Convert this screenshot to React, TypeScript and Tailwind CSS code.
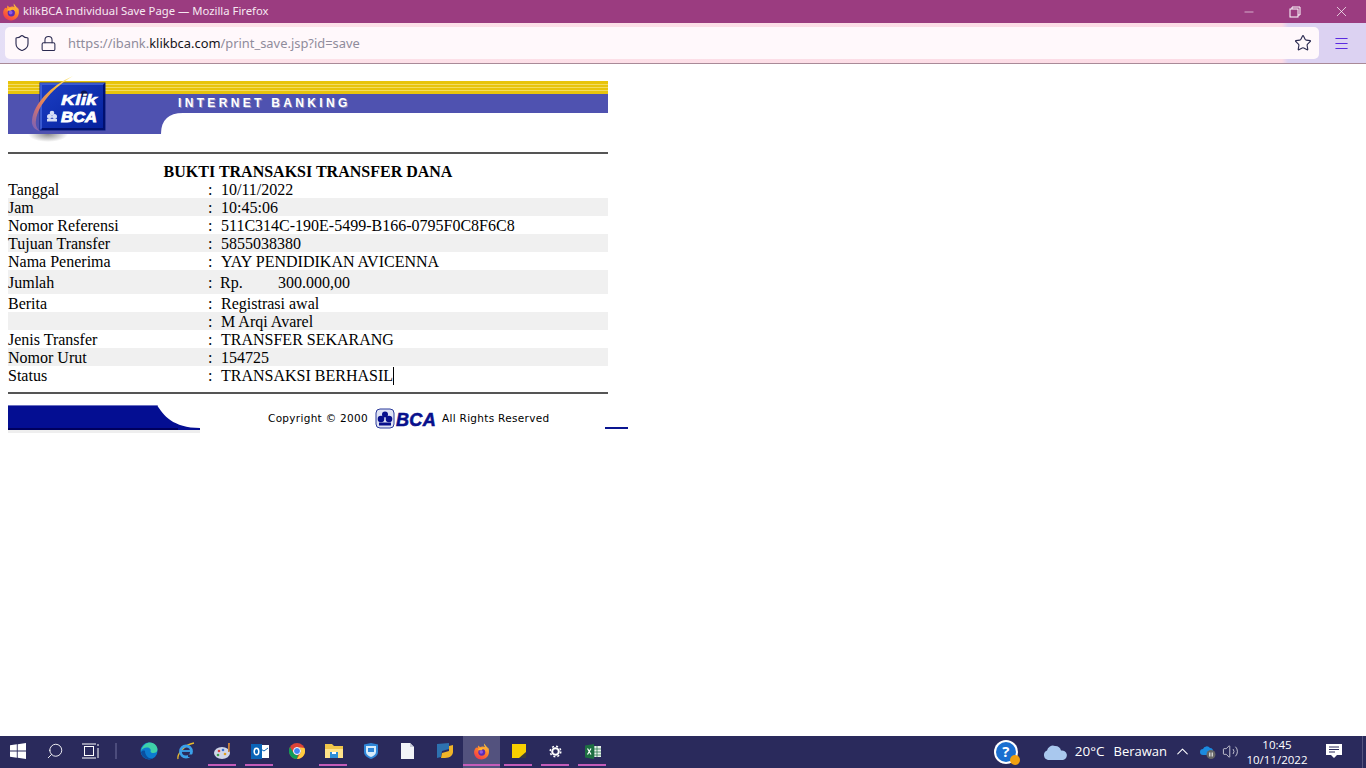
import React from "react";
import { Shield, Lock, Star, Menu, X, Minus, ChevronUp, Volume2, Search } from "lucide-react";

const serif = { fontFamily: '"Liberation Serif", serif' };

type Row = { label: string; value: React.ReactNode; shade?: boolean; tall?: boolean };
const rows: Row[] = [
  { label: "Tanggal", value: "10/11/2022" },
  { label: "Jam", value: "10:45:06", shade: true },
  { label: "Nomor Referensi", value: "511C314C-190E-5499-B166-0795F0C8F6C8" },
  { label: "Tujuan Transfer", value: "5855038380", shade: true },
  { label: "Nama Penerima", value: "YAY PENDIDIKAN AVICENNA" },
  {
    label: "Jumlah",
    shade: true,
    tall: true,
    value: (
      <span className="flex -ml-[1px]">
        <span className="w-[58px]">Rp.</span>
        <span>300.000,00</span>
      </span>
    ),
  },
  { label: "Berita", value: "Registrasi awal" },
  { label: "", value: "M Arqi Avarel", shade: true },
  { label: "Jenis Transfer", value: "TRANSFER SEKARANG" },
  { label: "Nomor Urut", value: "154725", shade: true },
  {
    label: "Status",
    value: (
      <span className="flex">
        TRANSAKSI BERHASIL
        <span className="inline-block w-px h-[18px] bg-black" />
      </span>
    ),
  },
];

function FirefoxIcon({ size = 18 }: { size?: number }) {
  return (
    <svg width={size} height={size} viewBox="0 0 32 32">
      <defs>
        <linearGradient id="ffa" x1="0.8" y1="0" x2="0.2" y2="1">
          <stop offset="0" stopColor="#ffcf3a" />
          <stop offset="0.5" stopColor="#ff7a2b" />
          <stop offset="1" stopColor="#f0324f" />
        </linearGradient>
      </defs>
      <path
        d="M29.500 11c-.7-1.600-2-3.400-3.100-4.100.9 1.700 1.400 3.200 1.600 4.300C26.500 7.500 23.800 5.500 21 1c-.6 3 .2 5 2 6.500-3-1.500-6.500-1.500-9.500 0C12 6.800 11 6 10 4.500 9 6.500 8.700 8.500 8.700 9.500 7.500 8.800 6.600 8.600 6 8.500 3.500 11 2 14 2 17.500 2 25.300 8.300 31 16 31s14-6.300 14-14c0-2-.2-4-.5-6z"
        fill="url(#ffa)"
      />
      <circle cx="16.500" cy="17.500" r="6.500" fill="#5b2bb5" />
      <circle cx="15.500" cy="17" r="3.300" fill="#8f5be0" />
      <path d="M9 13c3-4 8-5 12-3 2 1 3 3 3.500 5-2-3-5-3.500-7-3-1 2-5 2-8.500 1z" fill="#ffb52e" />
    </svg>
  );
}

function Banner() {
  return (
    <svg width={600} height={70} viewBox="0 0 600 70" className="block overflow-visible">
      <defs>
        <linearGradient id="arc" x1="1" y1="0" x2="0" y2="1">
          <stop offset="0" stopColor="#fff6a0" />
          <stop offset="0.35" stopColor="#f4b13a" />
          <stop offset="0.7" stopColor="#d9746a" />
          <stop offset="1" stopColor="#6d5fc0" />
        </linearGradient>
        <linearGradient id="sq" x1="0" y1="0" x2="1" y2="1">
          <stop offset="0" stopColor="#1c3fc4" />
          <stop offset="1" stopColor="#04209c" />
        </linearGradient>
        <radialGradient id="shd">
          <stop offset="0" stopColor="#8c8c8c" />
          <stop offset="1" stopColor="#ffffff" />
        </radialGradient>
      </defs>
      <ellipse cx="40" cy="60" rx="20" ry="8" fill="url(#shd)" />
      <rect x="0" y="7" width="600" height="13" fill="#e8c40c" />
      <rect x="0" y="10" width="600" height="1" fill="#f3dc62" />
      <rect x="0" y="13" width="600" height="1" fill="#f3dc62" />
      <rect x="0" y="16" width="600" height="1" fill="#f3dc62" />
      <rect x="0" y="20" width="600" height="40" fill="#4f52b0" />
      <path d="M153 60Q153 39 175 39H600V60Z" fill="#ffffff" />
      <rect x="32" y="9" width="65" height="47" fill="url(#sq)" stroke="#0a1f80" strokeWidth="1" />
      <path d="M32 9H97L95 11H34V54L32 56Z" fill="#4a6be0" opacity="0.7" />
      <path d="M34 56H97V9L95 11V54H34Z" fill="#001070" />
      <path d="M65 2C42 12 26 30 24 46c-1 6 3 10 8 11-3-2-5-6-4-11C30 31 46 13 65 2Z" fill="url(#arc)" />
      <circle cx="76" cy="20" r="3.500" fill="#0a1550" />
      <text x="53" y="31" fill="#fff" stroke="#fff" strokeWidth="0.600" fontFamily="Liberation Sans, sans-serif" fontWeight="700" fontStyle="italic" fontSize="15" textLength="36" lengthAdjust="spacingAndGlyphs">
        Klik
      </text>
      <text x="53" y="48" fill="#fff" stroke="#fff" strokeWidth="0.900" fontFamily="Liberation Sans, sans-serif" fontWeight="700" fontStyle="italic" fontSize="15" textLength="36" lengthAdjust="spacingAndGlyphs">
        BCA
      </text>
      <circle cx="44" cy="39" r="2.300" fill="#d6def5" />
      <circle cx="41.500" cy="42.500" r="2.500" fill="#d6def5" />
      <circle cx="46.500" cy="42.500" r="2.500" fill="#d6def5" />
      <rect x="39" y="45" width="10" height="2.500" fill="#d6def5" />
      <text x="171" y="34" fill="#8a8ac0" fontFamily="Liberation Sans, sans-serif" fontWeight="700" fontSize="12" letterSpacing="3.330">
        INTERNET BANKING
      </text>
      <text x="170" y="33" fill="#fff" fontFamily="Liberation Sans, sans-serif" fontWeight="700" fontSize="12" letterSpacing="3.330">
        INTERNET BANKING
      </text>
    </svg>
  );
}

function BcaMini() {
  return (
    <svg width={62} height={22} viewBox="0 0 62 22" className="block overflow-visible">
      <rect x="1" y="1" width="18" height="19" rx="4" fill="#dfe3f5" stroke="#2a3a9a" />
      <circle cx="10" cy="6.500" r="3" fill="#08108c" />
      <circle cx="6" cy="11" r="3.300" fill="#08108c" />
      <circle cx="14" cy="11" r="3.300" fill="#08108c" />
      <rect x="4" y="14.500" width="12" height="3" fill="#08108c" />
      <text x="21" y="18" fill="#08108c" fontFamily="Liberation Sans, sans-serif" fontWeight="700" fontStyle="italic" fontSize="19" textLength="40" lengthAdjust="spacingAndGlyphs" stroke="#08108c" strokeWidth="0.600">
        BCA
      </text>
    </svg>
  );
}

function Footer() {
  return (
    <div className="flex h-[28px] mt-[11px] relative w-[620px]">
      <svg width={192} height={28} viewBox="0 0 192 28" className="block shrink-0">
        <rect x="0" y="25" width="192" height="3" fill="#eeeeee" />
        <path d="M0 0H149C155 10 165 23 192 23V25H0Z" fill="#040e92" />
        <path d="M0 0H149L150 1H0Z" fill="#6a70c0" />
        <rect x="0" y="23" width="170" height="2" fill="#00005e" />
      </svg>
      <div
        className="ml-[68px] flex items-center h-[28px] text-[10.500px] text-black tracking-[0.3px]"
        style={{ fontFamily: '"DejaVu Sans", sans-serif' }}
      >
        <span className="w-[107px] whitespace-nowrap">Copyright © 2000</span>
        <BcaMini />
        <span className="ml-[5px] whitespace-nowrap">All Rights Reserved</span>
      </div>
      <div className="absolute left-[597px] top-[22px] w-[23px] h-[2px] bg-[#0a1590]" />
    </div>
  );
}

function Receipt() {
  return (
    <div className="pl-[8px] pt-[10px] w-[608px] box-content" style={serif}>
      <Banner />
      <div className="h-[2px] bg-[#555555] mt-[8px] w-[600px]" />
      <div className="w-[600px] text-black text-[16px] leading-[18px] mt-[8px]">
        <div className="font-bold text-center h-[18px] pt-[1px] box-border">BUKTI TRANSAKSI TRANSFER DANA</div>
        {rows.map((r, i) => (
          <div
            key={i}
            className={`flex items-center pt-[2px] ${r.tall ? "h-[24px]" : "h-[18px]"} ${r.shade ? "bg-[#f0f0f0]" : ""}`}
          >
            <div className="w-[200px] shrink-0">{r.label}</div>
            <div className="w-[13px] shrink-0">:</div>
            <div>{r.value}</div>
          </div>
        ))}
      </div>
      <div className="h-[2px] bg-[#555555] mt-[8px] w-[600px]" />
      <Footer />
    </div>
  );
}

function TitleBar() {
  return (
    <div className="h-[23px] bg-[#9b3c80] flex items-center text-white shrink-0">
      <div className="ml-[2px] w-[18px]">
        <FirefoxIcon size={18} />
      </div>
      <span className="ml-[3px] text-[11.300px] text-[#f6e8f1] whitespace-nowrap" style={{ fontFamily: '"Noto Sans", sans-serif' }}>
        klikBCA Individual Save Page — Mozilla Firefox
      </span>
      <div className="ml-auto flex items-center h-full">
        <div className="w-[46px] flex justify-center">
          <Minus size={14} strokeWidth={1} />
        </div>
        <div className="w-[46px] flex justify-center">
          <svg width="12" height="12" viewBox="0 0 12 12" fill="none" stroke="white" strokeWidth="1">
            <rect x="1" y="3" width="8" height="8" />
            <path d="M3 3V1H11V9H9" />
          </svg>
        </div>
        <div className="w-[46px] flex justify-center mr-[2px]">
          <X size={17} strokeWidth={1} />
        </div>
      </div>
    </div>
  );
}

function Toolbar() {
  return (
    <div className="h-[41px] shrink-0 relative flex items-start border-b border-[#a98a98] bg-[linear-gradient(90deg,#e4def6_0px,#f2e0f0_70px,#fde2e9_100px,#fcdbe5_1282px,#dcd2f2_1288px,#dcd2f2_1366px)]">
      <div className="mt-[4px] ml-[5px] w-[1314px] h-[32px] rounded-[5px] bg-[#fff8fb] flex items-center">
        <Shield size={18} strokeWidth={1.500} className="ml-[8px] text-[#2b2a50]" />
        <Lock size={17} strokeWidth={1.500} className="ml-[9px] text-[#2b2a50]" />
        <span className="ml-[11px] mt-[1px] text-[12.900px] text-[#8f8c9c] whitespace-nowrap" style={{ fontFamily: '"Noto Sans", sans-serif' }}>
          https://ibank.<span className="text-[#15141a]">klikbca.com</span>/print_save.jsp?id=save
        </span>
        <Star size={18} strokeWidth={1.500} className="ml-auto mr-[7px] text-[#2b2a50]" />
      </div>
      <Menu size={17} strokeWidth={1.500} className="ml-[14px] mt-[12px] text-[#5b2be0]" />
    </div>
  );
}

const T = ({ on, active, children }: { on?: boolean; active?: boolean; children: React.ReactNode }) => (
  <div className={`h-full w-[37px] relative flex items-center justify-center ${active ? "bg-[#53527e]" : ""}`}>
    <div className="-mt-[2px]">{children}</div>
    {on && <div className={`absolute bottom-[2px] h-[2px] bg-[#c45cb8] ${active ? "left-0 right-0" : "left-[4px] right-[5px]"}`} />}
  </div>
);

function Taskbar() {
  return (
    <div className="h-[32px] shrink-0 bg-[#2a2a5c] flex items-center text-white" style={{ fontFamily: '"Open Sans", "Noto Sans", sans-serif' }}>
      <div className="w-[36px] flex justify-center -mt-[2px]">
        <svg width="16" height="16" viewBox="0 0 16 16" fill="white">
          <path d="M0 2.300 6.800 1.300V7.600H0ZM7.700 1.200 16 0V7.600H7.700ZM0 8.400H6.800V14.700L0 13.700ZM7.700 8.400H16V16L7.700 14.800Z" />
        </svg>
      </div>
      <div className="w-[37px] flex justify-center -mt-[2px]">
        <Search size={18} strokeWidth={1.200} className="-scale-x-100" />
      </div>
      <div className="w-[35px] flex justify-center -mt-[2px]">
        <svg width="17" height="16" viewBox="0 0 17 16" fill="none" stroke="white" strokeWidth="1">
          <rect x="2.500" y="3.500" width="9" height="9" />
          <path d="M0 1H14M0 15H14M16 1V3M16 5V15" />
        </svg>
      </div>
      <div className="w-[22px] flex justify-start pl-[7px] h-full items-center">
        <div className="w-[2px] h-[16px] bg-[#4c4c7c] -mt-[2px]" />
      </div>
      <T>
        <svg width="18" height="18" viewBox="0 0 18 18">
          <circle cx="9" cy="9" r="8.500" fill="#0c7bd0" />
          <path d="M1 9C2 3 7 .5 10 .5c5 0 7.500 4 7.500 7 0 2.500-2 3.500-4 3.500-1.500 0-2.500-.5-3-1.500 1-2-1-4-3.500-4C4 5.500 2 7 1 9Z" fill="#3fd0a8" />
          <path d="M5 9c0 4 3 8 8 7.500-5 2.500-11-1-12-6 1-2 3-2.500 4-1.500Z" fill="#0a4fa0" />
        </svg>
      </T>
      <T>
        <svg width="18" height="18" viewBox="0 0 18 18" fill="none" className="overflow-visible">
          <path d="M1 17C0 13 6 3 17 1" stroke="#e8b92c" strokeWidth="1.300" />
          <circle cx="9" cy="9.500" r="5.500" stroke="#3aa0ea" strokeWidth="2.800" />
          <path d="M4 9H15" stroke="#3aa0ea" strokeWidth="1.800" />
          <path d="M11 12.500H16V15H11Z" fill="#2a2a5c" />
        </svg>
      </T>
      <T on>
        <svg width="18" height="18" viewBox="0 0 18 18">
          <ellipse cx="8" cy="11" rx="8" ry="6" fill="#cfd6e8" />
          <circle cx="5" cy="9" r="1.300" fill="#d94040" />
          <circle cx="9" cy="8" r="1.300" fill="#3a70d0" />
          <circle cx="4" cy="13" r="1.300" fill="#40a050" />
          <circle cx="11" cy="12" r="1.300" fill="#e0a020" />
          <path d="M14 1h2l-.5 9h-1.500z" fill="#c9813a" />
        </svg>
      </T>
      <T on>
        <svg width="18" height="17" viewBox="0 0 18 17">
          <rect x="5" y="2" width="13" height="13" fill="#fff" />
          <path d="M8 5l5 3 4-3" stroke="#0a64b8" fill="none" />
          <rect x="0" y="1" width="11" height="15" fill="#0a64b8" />
          <ellipse cx="5.500" cy="8.500" rx="2.300" ry="3.300" fill="none" stroke="#fff" strokeWidth="1.500" />
        </svg>
      </T>
      <T>
        <svg width="16" height="16" viewBox="0 0 16 16">
          <circle cx="8" cy="8" r="8" fill="#db4437" />
          <path d="M8 16A8 8 0 0 1 1 4l3.500 6A4 4 0 0 0 9 12Z" fill="#0f9d58" />
          <path d="M15.500 5A8 8 0 0 1 8 16l3.400-6A4 4 0 0 0 8 4Z" fill="#ffcd40" />
          <circle cx="8" cy="8" r="3.500" fill="#4285f4" stroke="#fff" />
        </svg>
      </T>
      <T on>
        <svg width="18" height="16" viewBox="0 0 18 16">
          <path d="M0 1h7l2 2h9v12H0z" fill="#f0c64a" />
          <rect x="0" y="6" width="18" height="9" fill="#ffe38a" />
          <rect x="5" y="9" width="8" height="6" fill="#2f8fd8" />
          <rect x="7" y="9" width="4" height="2" fill="#fff" />
        </svg>
      </T>
      <T>
        <svg width="14" height="16" viewBox="0 0 14 16">
          <path d="M0 1.500 7 0l7 1.500V9c0 3.500-3 5.500-7 7-4-1.500-7-3.500-7-7Z" fill="#2f86d8" />
          <path d="M2 3h10v6c0 2.500-2.500 4-5 5-2.500-1-5-2.500-5-5Z" fill="#d6ebfb" />
          <rect x="4" y="5" width="6" height="4" fill="#2f86d8" />
        </svg>
      </T>
      <T>
        <svg width="13" height="16" viewBox="0 0 13 16">
          <path d="M0 0h9l4 4v12H0z" fill="#f2f4f8" />
          <path d="M9 0l4 4H9z" fill="#c8ccd8" />
        </svg>
      </T>
      <T>
        <svg width="16" height="16" viewBox="0 0 16 16">
          <path d="M0 1 12 0v6l-7 2-1 6-4 1Z" fill="#2d72b0" />
          <path d="M16 2v7c0 3-3 6-8 6H4l1-5 7-2V3Z" fill="#f0b428" />
        </svg>
      </T>
      <T on active>
        <FirefoxIcon size={17} />
      </T>
      <div className="w-px h-full bg-[#454470] -ml-px" />
      <T on>
        <svg width="14" height="14" viewBox="0 0 14 14">
          <rect width="14" height="14" fill="#f8d000" />
          <path d="M14 8v6H7z" fill="#3a3a3a" />
        </svg>
      </T>
      <T on>
        <svg width="13" height="13" viewBox="0 0 13 13" fill="none" stroke="white">
          <circle cx="6.500" cy="6.500" r="3.300" strokeWidth="2" />
          <circle cx="6.500" cy="6.500" r="5.300" strokeWidth="1.500" strokeDasharray="2 2.160" />
        </svg>
      </T>
      <T on>
        <svg width="16" height="15" viewBox="0 0 16 15">
          <rect x="7" y="2" width="9" height="11" fill="#e6f2ea" />
          <path d="M9 2v11M12 2v11M7 5h9M7 8h9M7 11h9" stroke="#1d6f42" strokeWidth="0.700" />
          <path d="M0 1.500 9 0v15L0 13.500Z" fill="#1d6f42" />
          <path d="M2.500 4.500l3.500 6M6 4.500l-3.500 6" stroke="#fff" strokeWidth="1.200" />
        </svg>
      </T>
      <div className="ml-auto flex items-center h-full relative">
        <div className="w-[24px] h-[24px] rounded-full bg-white mr-[25px] flex items-center justify-center relative -mt-[1px]">
          <div className="w-[20px] h-[20px] rounded-full bg-[#1a6fd0] flex items-center justify-center text-[15px] font-bold leading-none text-white">?</div>
          <div className="absolute right-[-2px] bottom-[-1px] w-[10px] h-[10px] rounded-full bg-[#f0a010]" />
        </div>
        <svg width="25" height="16" viewBox="0 0 25 16" className="-mt-[1px]">
          <path d="M5 16A5 5 0 0 1 4 6.500 6 6 0 0 1 12 2a6 6 0 0 1 6 4.500A4.800 4.800 0 0 1 20 16Z" fill="#a9c8ee" />
        </svg>
        <span className="ml-[7px] text-[13.500px] whitespace-nowrap -mt-[1px]">20°C</span>
        <span className="ml-[9px] text-[13px] whitespace-nowrap -mt-[1px]">Berawan</span>
        <ChevronUp size={19} strokeWidth={1.300} className="ml-[6px] -mt-[2px]" />
        <svg width="16" height="14" viewBox="0 0 16 14" className="ml-[8px] -mt-[1px]">
          <path d="M3 10A3 3 0 0 1 3 4a4 4 0 0 1 7-1 3 3 0 0 1 3 4 2 2 0 0 1 0 3Z" fill="#1b8ae0" />
          <circle cx="11" cy="9.500" r="4.500" fill="#666" />
          <path d="M9.800 7.500v4M12.200 7.500v4" stroke="#fff" />
        </svg>
        <Volume2 size={17} strokeWidth={1} className="ml-[6px] -mt-[1px]" />
        <div className="w-[62px] ml-[7px] text-center text-[11.500px] leading-[15px] text-white whitespace-nowrap -mt-[1px]">
          <div>10:45</div>
          <div>10/11/2022</div>
        </div>
        <div className="ml-[18px] mr-[24px] -mt-[2px]">
          <svg width="16" height="16" viewBox="0 0 16 16">
            <path d="M0 1h16v11h-5l-3 3-3-3H0Z" fill="white" />
            <path d="M3 4h10M3 6.500h10M3 9h6" stroke="#2a2a5c" />
          </svg>
        </div>
        <div className="absolute right-[3px] top-0 bottom-0 w-px bg-[#55547e]" />
      </div>
    </div>
  );
}

export default function App() {
  return (
    <div className="w-[1366px] h-[768px] flex flex-col bg-white overflow-hidden">
      <TitleBar />
      <Toolbar />
      <div className="flex-1 min-h-0">
        <Receipt />
      </div>
      <Taskbar />
    </div>
  );
}
